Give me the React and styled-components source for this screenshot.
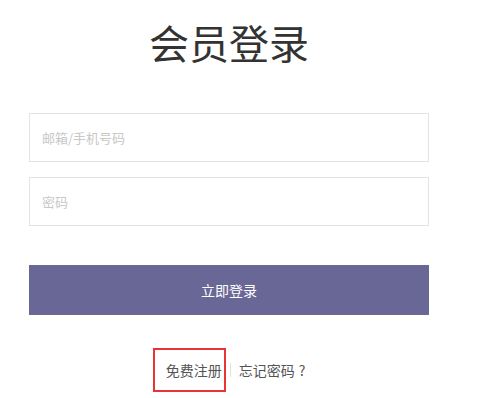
import React from 'react'
import styled, { createGlobalStyle } from "styled-components"

const GlobalStyle = createGlobalStyle`
  body {
    margin: 0;
    background: #fff;
    font-family: "Microsoft YaHei", "Noto Sans CJK SC", sans-serif;
  }
`;

const Container = styled.div`
  width: 400px;
  padding: 14px 0 0 29px;
  display: flex;
  flex-direction: column;
`;

const Title = styled.h1`
  margin: 0;
  font-size: 40px;
  font-weight: 400;
  line-height: 56px;
  color: #333;
  text-align: center;
  font-family: "Noto Sans CJK SC", sans-serif;
`;

const Form = styled.div`
  display: flex;
  flex-direction: column;
  margin-top: 43px;
`;

const Input = styled.input`
  box-sizing: border-box;
  width: 400px;
  height: 49px;
  margin-bottom: 15px;
  padding: 0 12px;
  border: 1px solid #e3e3e3;
  outline: none;
  font-size: 13px;
  font-family: "Noto Sans CJK SC", sans-serif;
  color: #333;
  &::placeholder {
    color: #c8c8c8;
  }
`;

const Button = styled.button`
  box-sizing: border-box;
  width: 400px;
  height: 50px;
  margin-top: 24px;
  border: none;
  background-color: #686796;
  color: #fff;
  font-size: 14px;
  font-family: "Noto Sans CJK SC", sans-serif;
  cursor: pointer;
`;

const Links = styled.div`
  display: flex;
  justify-content: center;
  align-items: center;
  margin-top: 33px;
  font-size: 14px;
  font-family: "Noto Sans CJK SC", sans-serif;
  color: #555;
`;

const Link = styled.a`
  display: flex;
  align-items: center;
  height: ${(p) => (p.$marked ? "40px" : "auto")};
  padding: ${(p) => (p.$marked ? "0 2px 0 11px" : "0")};
  border: ${(p) => (p.$marked ? "2px solid #e53535" : "none")};
  cursor: pointer;
`;

const Question = styled.span`
  margin-left: 4px;
`;

const Divider = styled.span`
  width: 1px;
  height: 14px;
  margin: 0 8px 0 4px;
  background: #e0e0e0;
`;

const Login = () => {
  return (
    <Container>
      <GlobalStyle />
      <Title>会员登录</Title>
      <Form>
        <Input placeholder="邮箱/手机号码" />
        <Input type="password" placeholder="密码" />
        <Button>立即登录</Button>
      </Form>
      <Links>
        <Link $marked>免费注册</Link>
        <Divider />
        <Link>忘记密码<Question>?</Question></Link>
      </Links>
    </Container>
  )
}

export default Login;
